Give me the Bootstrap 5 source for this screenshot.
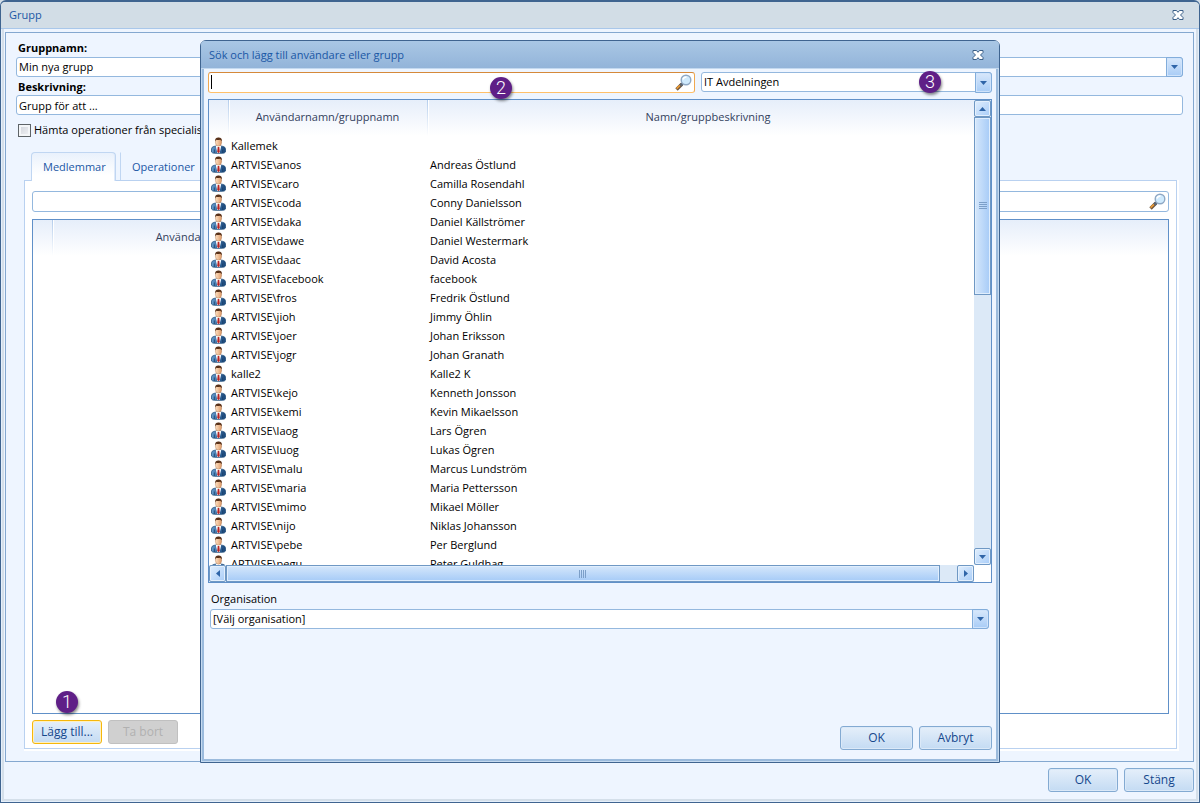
<!DOCTYPE html>
<html lang="sv">
<head>
<meta charset="utf-8">
<meta name="viewport" content="width=device-width, initial-scale=1">
<title>Grupp</title>
<link href="https://cdn.jsdelivr.net/npm/bootstrap@5.3.0/dist/css/bootstrap.min.css" rel="stylesheet">
<style>
  :root { --navy: #3f6490; --line: #94b8de; --deep: #6090c8; --sky: #eef5ff; }
  body { font-family: "Open Sans", "Noto Sans", sans-serif; font-size: 11px; line-height: 16px; color: #000; background: #d4dfe8; }
  .main-window { min-height: 100vh; border: 1px solid var(--navy); border-top-width: 2px; border-radius: 6px 6px 0 0; background: var(--sky); box-shadow: inset 0 0 0 1px #e4effb, inset 0 0 0 3px #d4dfea; padding: 0 5px 0 4px; }
  .titlebar { height: 27px; margin: 0 -5px 0 -4px; padding: 0 15px 0 8px; color: #1a57a5; background: #d2dde6; border-bottom: 1px solid #a9c7ea; border-radius: 4px 4px 0 0; }
  .close-x { border: 0; background: none; padding: 0; line-height: 0; }
  .frame { margin-top: 3px; border: 1px solid #84a8d0; padding: 7px 10px 12px; }
  .caption { padding-left: 2px; font-weight: 700; align-self: flex-start; }
  .group-pick { margin: 1px 0 2px; }
  .field { display: block; width: 100%; height: 20px; padding: 0 2px; border: 1px solid var(--line); border-radius: 3px; background: #fff; color: #000; font-size: 11px; line-height: 16px; outline: 0; appearance: none; }
  .field.tall { height: 21px; }
  .field.active { border-color: #d5893a #f0a850 #ffc06a; caret-color: transparent; }
  .caret { position: absolute; top: 3px; left: 3px; width: 1px; height: 14px; background: #000; pointer-events: none; }
  .drop-mark { position: absolute; top: 0; right: 0; bottom: 0; width: 17px; border: 1px solid #82addb; border-radius: 0 3px 3px 0; background: linear-gradient(#d8e8fb, #a8ccf6); box-shadow: inset 0 0 0 1px #cfe3fb; pointer-events: none; }
  .lens { position: absolute; top: 2px; right: 3px; border: 0; padding: 0; background: none; line-height: 0; }
  .check-line { margin-top: 7px; padding-left: 2px; gap: 3px; }
  .tick { appearance: none; width: 13px; height: 13px; margin: 0; border: 1px solid #5e6468; background: linear-gradient(135deg, #cfd3da, #f3f4f6); box-shadow: inset 0 0 0 2px #f4f6f8; }
  .tab-row { padding-left: 15px; margin-top: 14px; }
  .tab-btn { height: 28px; border: 1px solid #c0d6f2; border-bottom: 0; border-radius: 4px 4px 0 0; padding: 0 11px; color: #1a57a5; background: var(--sky); font-size: 11px; }
  .tab-btn.on { width: 85px; height: 29px; margin-bottom: -1px; background: linear-gradient(#e9f1fc, #fff 80%); position: relative; z-index: 1; box-shadow: inset -1px 0 0 #dfeafa; }
  .tab-btn.off { margin-left: 4px; border-top-color: transparent; border-right-color: transparent; border-radius: 0; }
  .pane { margin: 0 6px 0 8px; border: 1px solid #b9d1f0; background: #fff; box-shadow: 1px 1px 0 1px #fff; padding: 10px 7px 4px; }
  .member-search { margin-bottom: 7px; }
  .member-tools { padding-top: 6px; }
  .btn-line { display: flex; gap: 6px; }
  .window-foot { padding: 6px 0 10px; }
  .list { border: 1px solid var(--deep); background: #fff; }
  .grid { width: 100%; table-layout: fixed; border-collapse: collapse; }
  .grid th { height: 36px; padding: 0 0 2px; font-weight: 400; text-align: center; color: #33415c; background: linear-gradient(#e6eefa, #fff); }
  .grid th + th { background: linear-gradient(#b4cdec, #fff) left / 1px 100% no-repeat, linear-gradient(#fff, #fff) 1px 0 / 1px 100% no-repeat, linear-gradient(#e6eefa, #fff); }
  .grid td { height: 19px; padding: 0 0 0 3px; white-space: nowrap; line-height: 19px; }
  .grid td:first-child { padding-left: 2px; }
  .grid td svg { display: block; }
  .push { height: 24px; width: 70px; padding: 0; border: 1px solid #83aad2; border-radius: 3px; background: linear-gradient(#e5effa, #c4dbf3); box-shadow: inset 0 0 0 1px #dbe9f8; color: #15478c; font-size: 12px; font-weight: 500; line-height: 20px; }
  .push.hot { border-color: #f5b70c; box-shadow: inset 0 0 0 1px #fff0c0; }
  .push:disabled { border-color: #c0c0c0; background: #d0d0d0; box-shadow: none; color: #b0b0b0; }
  .push.wide { width: 73px; }
  .callout { position: absolute; width: 22px; height: 22px; border-radius: 50%; background: #5f1f87; color: #fff; font: 300 18px/21px Roboto, sans-serif; text-align: center; box-shadow: 1px 2px 3px #0007; z-index: 3; }
  .dialog { position: absolute; inset: 38px 199px 39px; z-index: 5; border: 1px solid var(--navy); border-radius: 6px 6px 0 0; background: var(--sky); box-shadow: inset 0 0 0 1px #c5daf0, inset 0 0 0 3px #9bbbdd; padding: 0 7px 12px; }
  .dialog .titlebar { height: 28px; margin: 0 -7px; padding: 0 15px 0 8px; background: linear-gradient(#a9c7e5, #93b4d9); border-bottom-color: #c4d9ef; }
  .filters { display: flex; gap: 6px; margin: 3px 0 6px; }
  .unit-pick { flex: 0 0 291px; }
  .results { height: 484px; margin-bottom: 8px; }
  .org-label { padding-left: 3px; }
  .org-pick { margin: 2px 3px 0 2px; }
  .sizer { width: 780px; }
  .step { width: 18px; height: 17px; flex: none; padding: 0; border: 1px solid #6f98c4; border-radius: 2px; background: linear-gradient(135deg, #e0eefd, #a9cdf8); box-shadow: inset 0 0 0 1px #e4f0fd; line-height: 0; }
  .vbar { width: 17px; background: #dce9f7; }
  .vbar .step { width: 17px; }
  .vthumb { height: 178px; border: 1px solid #6f98c4; background: linear-gradient(90deg, #d5e7fb, #a6cbf7); box-shadow: inset 0 0 0 1px #e0eefd; }
  .hbar { height: 17px; margin-right: 17px; background: #dce9f7; }
  .hbar .step { width: 17px; }
  .hthumb { flex: 0 0 714px; border: 1px solid #6f98c4; background: linear-gradient(#d5e7fb, #a6cbf7); box-shadow: inset 0 0 0 1px #e0eefd; }
</style>
</head>
<body>
<svg width="0" height="0" class="position-absolute" aria-hidden="true">
  <defs>
    <linearGradient id="coat" x1="0" x2="1"><stop offset="0" stop-color="#6ba0cf"/><stop offset=".5" stop-color="#34699f"/><stop offset="1" stop-color="#1c4778"/></linearGradient>
    <linearGradient id="skin" x1="0" x2="1"><stop offset="0" stop-color="#ffe2c4"/><stop offset="1" stop-color="#dd9a68"/></linearGradient>
    <symbol id="user" viewBox="0 0 15 17">
      <path d="M.5 15V12Q.6 9.800 3 9.400L7.500 8.600L12 9.400Q14.400 9.800 14.500 12V15Q13.500 16.300 11.500 16.300H3.500Q1.500 16.300 .5 15Z" fill="url(#coat)" stroke="#24527f" stroke-width=".8"/>
      <path d="M3.300 12.500V16M11.700 12.500V16" stroke="#173d66" stroke-width=".8"/>
      <path d="M4.800 9.200L7.500 8L10.200 9.200L8.600 16H6.400Z" fill="#fff"/>
      <path d="M6.700 10H8.300L8.800 14.800L7.500 16.300L6.200 14.800Z" fill="#b52525"/>
      <ellipse cx="7.500" cy="5.200" rx="3.100" ry="4" fill="url(#skin)" stroke="#a56b42" stroke-width=".4"/>
      <path d="M4.200 4.600Q3.600 .5 7.500 .5T10.800 4.600Q10 2.900 9 2.700Q7 3.100 5.200 2.700Z" fill="#573018"/>
    </symbol>
    <symbol id="lens" viewBox="0 0 17 17">
      <path d="M1.500 15.500L7 10" stroke="#6d5640" stroke-width="3.400"/>
      <path d="M1.600 14.600L5 11.400" stroke="#e99a35" stroke-width="1.800"/>
      <path d="M5.400 11.600L7.600 9.500" stroke="#5c6672" stroke-width="3"/>
      <circle cx="11" cy="6" r="4.800" fill="#cfeafd" stroke="#8fa8c4" stroke-width="1.400"/>
      <path d="M8 5.500Q8.500 3 11.500 3" fill="none" stroke="#fff" stroke-width="1.600"/>
    </symbol>
    <symbol id="cross" viewBox="0 0 12 10">
      <path d="M1 .5H4.500L6 2.300L7.500 .5H11V2.500L8.500 5L11 7.500V9.500H7.500L6 7.700L4.500 9.500H1V7.500L3.500 5L1 2.500Z" fill="#fff" stroke="#3b5f88" stroke-width="1"/>
    </symbol>
    <symbol id="tri" viewBox="0 0 9 6"><path d="M1 1H8L4.500 5Z" fill="#2f65a8"/></symbol>
  </defs>
</svg>

<main class="main-window d-flex flex-column position-relative">
  <header class="titlebar d-flex align-items-center justify-content-between">
    <span>Grupp</span>
    <button class="close-x" type="button" aria-label="Stäng fönster"><svg width="12" height="10"><use href="#cross"/></svg></button>
  </header>

  <section class="frame flex-grow-1 d-flex flex-column">
    <label class="caption" for="gname">Gruppnamn:</label>
    <div class="position-relative group-pick">
      <select class="field" id="gname"><option>Min nya grupp</option></select>
      <span class="drop-mark d-flex align-items-center justify-content-center"><svg width="9" height="6"><use href="#tri"/></svg></span>
    </div>
    <label class="caption" for="gdesc">Beskrivning:</label>
    <input class="field" id="gdesc" value="Grupp för att ...">
    <div class="check-line d-flex align-items-center">
      <input class="tick" type="checkbox" id="fetch">
      <label for="fetch">Hämta operationer från specialist</label>
    </div>

    <div class="tab-row d-flex align-items-end" role="tablist">
      <button class="tab-btn on" type="button" role="tab" aria-selected="true">Medlemmar</button>
      <button class="tab-btn off" type="button" role="tab" aria-selected="false">Operationer</button>
    </div>
    <div class="pane flex-grow-1 d-flex flex-column">
      <div class="position-relative member-search">
        <input class="field tall" type="text" aria-label="Sök medlem">
        <button class="lens" type="button" aria-label="Sök"><svg width="17" height="17"><use href="#lens"/></svg></button>
      </div>
      <div class="list flex-grow-1">
        <table class="grid">
          <colgroup><col style="width:19px"><col style="width:351px"><col></colgroup>
          <thead><tr><th></th><th>Användarnamn/gruppnamn</th><th></th></tr></thead>
        </table>
      </div>
      <div class="btn-line position-relative member-tools">
        <span class="callout" style="left:24px;top:-23px">1</span>
        <button class="push hot" type="button">Lägg till...</button>
        <button class="push" type="button" disabled>Ta bort</button>
      </div>
    </div>
  </section>

  <footer class="window-foot btn-line justify-content-end">
    <button class="push" type="button">OK</button>
    <button class="push" type="button">Stäng</button>
  </footer>

  <section class="dialog d-flex flex-column" role="dialog" aria-label="Sök och lägg till användare eller grupp">
    <header class="titlebar d-flex align-items-center justify-content-between">
      <span>Sök och lägg till användare eller grupp</span>
      <button class="close-x" type="button" aria-label="Stäng dialog"><svg width="12" height="10"><use href="#cross"/></svg></button>
    </header>
    <div class="filters">
      <div class="position-relative flex-grow-1">
        <input class="field tall active" id="find" type="text" aria-label="Sök">
        <span class="caret"></span>
        <button class="lens" type="button" aria-label="Sök"><svg width="17" height="17"><use href="#lens"/></svg></button>
        <span class="callout" style="left:282px;top:5px">2</span>
      </div>
      <div class="position-relative unit-pick">
        <select class="field" aria-label="Avdelning"><option>IT Avdelningen</option></select>
        <span class="drop-mark d-flex align-items-center justify-content-center"><svg width="9" height="6"><use href="#tri"/></svg></span>
        <span class="callout" style="left:218px;top:-1px">3</span>
      </div>
    </div>
    <div class="list results d-flex flex-column">
      <div class="d-flex flex-grow-1 overflow-hidden">
        <div class="flex-grow-1 overflow-hidden">
          <div class="sizer">
            <table class="grid">
              <colgroup><col style="width:19px"><col style="width:199px"><col></colgroup>
              <thead><tr><th></th><th>Användarnamn/gruppnamn</th><th>Namn/gruppbeskrivning</th></tr></thead>
              <tbody id="people"></tbody>
            </table>
          </div>
        </div>
        <div class="vbar d-flex flex-column flex-shrink-0">
          <button class="step" type="button" aria-label="Upp"><svg width="9" height="6"><path d="M1 5H8L4.500 1Z" fill="#2f65a8"/></svg></button>
          <div class="vthumb d-flex align-items-center justify-content-center"><svg width="8" height="8"><path d="M0 .5H8M0 2.500H8M0 4.500H8M0 6.500H8" stroke="#7c9fc8"/></svg></div>
          <button class="step mt-auto" type="button" aria-label="Ned"><svg width="9" height="6"><use href="#tri"/></svg></button>
        </div>
      </div>
      <div class="hbar d-flex flex-shrink-0">
        <button class="step" type="button" aria-label="Vänster"><svg width="6" height="9"><path d="M5 1V8L1 4.500Z" fill="#2f65a8"/></svg></button>
        <div class="hthumb d-flex align-items-center justify-content-center"><svg width="8" height="8"><path d="M.5 0V8M2.500 0V8M4.500 0V8M6.500 0V8" stroke="#7c9fc8"/></svg></div>
        <button class="step ms-auto" type="button" aria-label="Höger"><svg width="6" height="9"><path d="M1 1V8L5 4.500Z" fill="#2f65a8"/></svg></button>
      </div>
    </div>
    <label for="org" class="org-label align-self-start">Organisation</label>
    <div class="position-relative org-pick">
      <select class="field" id="org"><option>[Välj organisation]</option></select>
      <span class="drop-mark d-flex align-items-center justify-content-center"><svg width="9" height="6"><use href="#tri"/></svg></span>
    </div>
    <div class="btn-line justify-content-end mt-auto">
      <button class="push wide" type="button">OK</button>
      <button class="push wide" type="button">Avbryt</button>
    </div>
  </section>
</main>
<script src="https://cdn.jsdelivr.net/npm/bootstrap@5.3.0/dist/js/bootstrap.bundle.min.js"></script>
<script>
  const people = [
    ["Kallemek", ""], ["ARTVISE\\anos", "Andreas Östlund"], ["ARTVISE\\caro", "Camilla Rosendahl"],
    ["ARTVISE\\coda", "Conny Danielsson"], ["ARTVISE\\daka", "Daniel Källströmer"], ["ARTVISE\\dawe", "Daniel Westermark"],
    ["ARTVISE\\daac", "David Acosta"], ["ARTVISE\\facebook", "facebook"], ["ARTVISE\\fros", "Fredrik Östlund"],
    ["ARTVISE\\jioh", "Jimmy Öhlin"], ["ARTVISE\\joer", "Johan Eriksson"], ["ARTVISE\\jogr", "Johan Granath"],
    ["kalle2", "Kalle2 K"], ["ARTVISE\\kejo", "Kenneth Jonsson"], ["ARTVISE\\kemi", "Kevin Mikaelsson"],
    ["ARTVISE\\laog", "Lars Ögren"], ["ARTVISE\\luog", "Lukas Ögren"], ["ARTVISE\\malu", "Marcus Lundström"],
    ["ARTVISE\\maria", "Maria Pettersson"], ["ARTVISE\\mimo", "Mikael Möller"], ["ARTVISE\\nijo", "Niklas Johansson"],
    ["ARTVISE\\pebe", "Per Berglund"], ["ARTVISE\\pegu", "Peter Guldhag"]
  ];
  document.getElementById("people").innerHTML = people.map(([user, name]) =>
    `<tr><td><svg width="15" height="17"><use href="#user"/></svg></td><td>${user}</td><td>${name}</td></tr>`).join("");
</script>
</body>
</html>
